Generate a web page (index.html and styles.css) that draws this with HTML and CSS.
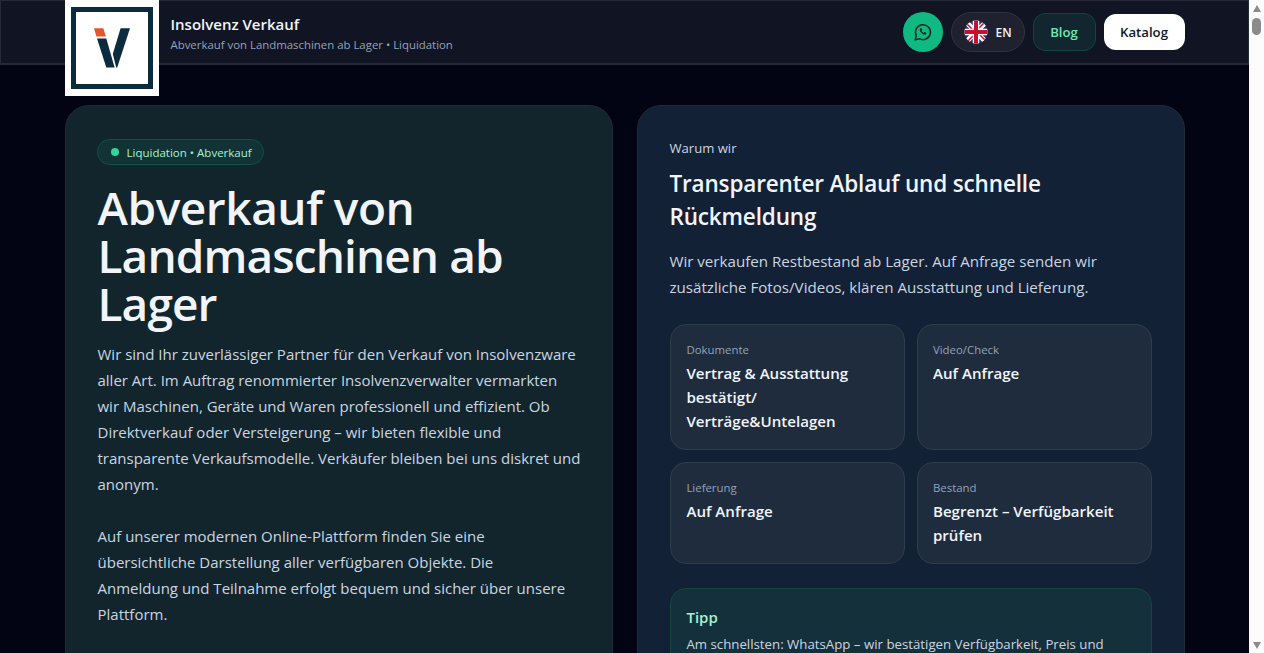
FILE: index.html
```html
<!DOCTYPE html>
<html lang="de">
<head>
  <meta charset="UTF-8">
  <meta name="viewport" content="width=device-width, initial-scale=1.0">
  <title>Insolvenz Verkauf</title>
  <link rel="stylesheet" href="styles.css">
</head>
<body>
  <div class="page">
    <header class="header">
      <div class="header-inner">
        <a class="logo" href="#">
          <svg width="94" height="96" viewBox="0 0 94 96">
            <rect width="94" height="96" fill="#fff"/>
            <rect x="8.5" y="9.5" width="77" height="77" fill="none" stroke="#0c2b3f" stroke-width="5"/>
            <path d="M29 28.3h9.3l2.6 8.2h-9.5z" fill="#e2572b"/>
            <path d="M32 38.4h9.3l8.3 29h-8.3z" fill="#0c2b3f"/>
            <path d="M55.6 28.3H65L52.2 67.5h-1L47.8 54z" fill="#0c2b3f"/>
          </svg>
        </a>
        <div class="brand">
          <div class="brand-name">Insolvenz Verkauf</div>
          <div class="brand-sub">Abverkauf von Landmaschinen ab Lager • Liquidation</div>
        </div>
        <nav class="nav">
          <a class="whatsapp" href="#">
            <svg width="20" height="20" viewBox="0 0 20 20" fill="none" stroke="#062b25">
              <path d="M2.200 17.900l1.100-4.300A7.500 7.500 0 1 1 6.300 16.700z" stroke-width="1.500" stroke-linejoin="round"/>
              <path d="M7.2 6.2c-1 1.200-.4 3.100 1.100 4.600s3.400 2.300 4.700 1.400l.4-1.200-1.700-.9-1 .8c-.9-.3-1.700-1.100-2.100-2.100l.7-.9-.8-1.700z" fill="#062b25" stroke="none"/>
            </svg>
          </a>
          <a class="lang" href="#">
            <svg width="24" height="24" viewBox="0 0 24 24">
              <clipPath id="round"><circle cx="12" cy="12" r="11.500"/></clipPath>
              <g clip-path="url(#round)">
                <rect width="24" height="24" fill="#1b3a80"/>
                <path d="M0 0l24 24M24 0L0 24" stroke="#fff" stroke-width="5"/>
                <path d="M0 1l11 11M24 23L13 12M23 0L12 11M1 24l11-11" stroke="#c8102e" stroke-width="1.500"/>
                <path d="M12 0v24M0 12h24" stroke="#fff" stroke-width="6.500"/>
                <path d="M12 0v24M0 12h24" stroke="#c8102e" stroke-width="4"/>
              </g>
            </svg>
            <span>EN</span>
          </a>
          <a class="blog" href="#">Blog</a>
          <a class="katalog" href="#">Katalog</a>
        </nav>
      </div>
    </header>

    <main class="hero">
      <section class="card card-green">
        <div class="badge"><span class="dot"></span><span>Liquidation • Abverkauf</span></div>
        <h1>Abverkauf von<br>Landmaschinen ab<br>Lager</h1>
        <p class="text">Wir sind Ihr zuverlässiger Partner für den Verkauf von Insolvenzware<br>
          aller Art. Im Auftrag renommierter Insolvenzverwalter vermarkten<br>
          wir Maschinen, Geräte und Waren professionell und effizient. Ob<br>
          Direktverkauf oder Versteigerung – wir bieten flexible und<br>
          transparente Verkaufsmodelle. Verkäufer bleiben bei uns diskret und<br>
          anonym.</p>
        <p class="text">Auf unserer modernen Online-Plattform finden Sie eine<br>
          übersichtliche Darstellung aller verfügbaren Objekte. Die<br>
          Anmeldung und Teilnahme erfolgt bequem und sicher über unsere<br>
          Plattform.</p>
      </section>

      <section class="card card-blue">
        <div class="eyebrow">Warum wir</div>
        <h2>Transparenter Ablauf und schnelle<br>Rückmeldung</h2>
        <p class="text">Wir verkaufen Restbestand ab Lager. Auf Anfrage senden wir<br>
          zusätzliche Fotos/Videos, klären Ausstattung und Lieferung.</p>
        <div class="tiles">
          <div class="tile">
            <div class="label">Dokumente</div>
            <div class="value">Vertrag &amp; Ausstattung<br>bestätigt/<br>Verträge&amp;Untelagen</div>
          </div>
          <div class="tile">
            <div class="label">Video/Check</div>
            <div class="value">Auf Anfrage</div>
          </div>
          <div class="tile">
            <div class="label">Lieferung</div>
            <div class="value">Auf Anfrage</div>
          </div>
          <div class="tile">
            <div class="label">Bestand</div>
            <div class="value">Begrenzt – Verfügbarkeit<br>prüfen</div>
          </div>
        </div>
        <div class="tip">
          <div class="tip-title">Tipp</div>
          <div class="tip-text">Am schnellsten: WhatsApp – wir bestätigen Verfügbarkeit, Preis und</div>
        </div>
      </section>
    </main>
  </div>

  <div class="scrollbar">
    <span class="arrow-up"></span>
    <span class="thumb"></span>
    <span class="arrow-down"></span>
  </div>
</body>
</html>
```
FILE: styles.css
```css
* {
  box-sizing: border-box;
}

body {
  margin: 0;
  height: 653px;
  display: flex;
  overflow: hidden;
  background: #020414;
  color: #f1f5f9;
  font-family: "Open Sans", "Noto Sans", sans-serif;
}

a {
  color: inherit;
  text-decoration: none;
}

h1, h2, p {
  margin: 0;
}

svg {
  display: block;
}

.page {
  flex: 1;
  min-width: 0;
  height: 653px;
  overflow: hidden;
}

/* header */
.header {
  height: 65px;
  background: #111423;
  border: 1px solid #262938;
  border-bottom-width: 2px;
}

.header-inner {
  width: 1120px;
  height: 63px;
  margin: -1px auto 0;
  display: flex;
  align-items: flex-start;
}

.brand {
  margin: 13px 0 0 12px;
  white-space: nowrap;
}

.brand-name {
  font-size: 15px;
  font-weight: 600;
  line-height: 22px;
}

.brand-sub {
  margin-top: 1px;
  font-size: 11.4px;
  line-height: 18px;
  color: #94a3b8;
}

.nav {
  margin-left: auto;
  height: 64px;
  display: flex;
  align-items: center;
  gap: 8px;
  font-size: 13.2px;
  font-weight: 600;
}

.whatsapp {
  width: 40px;
  height: 40px;
  border-radius: 50%;
  background: #10b981;
  display: flex;
  align-items: center;
  justify-content: center;
}

.lang {
  width: 74px;
  height: 40px;
  border: 1px solid #303240;
  border-radius: 20px;
  background: #1f212f;
  display: flex;
  align-items: center;
  padding-left: 12px;
  gap: 8px;
  font-size: 12px;
}

.blog {
  width: 63px;
  height: 38px;
  border: 1px solid #11453f;
  border-radius: 12px;
  background: #11262e;
  color: #6ee7b7;
  line-height: 36px;
  text-align: center;
}

.katalog {
  width: 81px;
  height: 36px;
  border-radius: 12px;
  background: #fff;
  color: #0f172a;
  line-height: 36px;
  text-align: center;
}

/* hero */
.hero {
  width: 1120px;
  margin: 40px auto 0;
  display: grid;
  grid-template-columns: 1fr 1fr;
  gap: 24px;
}

.card {
  height: 620px;
  padding: 33px 32px;
  border: 1px solid #232a38;
  border-radius: 24px;
  white-space: nowrap;
}

.card-green {
  background: #12252d;
}

.card-blue {
  background: #122136;
}

.badge {
  width: 167px;
  height: 26px;
  margin-left: -1px;
  padding-left: 13px;
  border: 1px solid #115043;
  border-radius: 13px;
  background: #123335;
  color: #a7f3d0;
  font-size: 11.5px;
  display: flex;
  align-items: center;
  gap: 8px;
}

.dot {
  width: 8px;
  height: 8px;
  border-radius: 50%;
  background: #34d399;
}

h1 {
  margin: 18px 0 14px;
  font-size: 46px;
  line-height: 48px;
  font-weight: 600;
  letter-spacing: -0.9px;
}

h1::first-line {
  letter-spacing: -0.45px;
}

.text {
  font-size: 15px;
  line-height: 26px;
  color: #cbd5e1;
}

.text + .text {
  margin-top: 26px;
}

.card-blue .text {
  margin-left: -1px;
  font-size: 15.13px;
}

.eyebrow {
  margin: -1px 0 0 -1px;
  font-size: 13.1px;
  line-height: 20px;
  color: #cbd5e1;
}

h2 {
  margin: 9px 0 15px -1px;
  font-size: 22.5px;
  line-height: 33px;
  font-weight: 600;
  letter-spacing: -0.15px;
}

.tiles {
  margin-top: 24px;
  display: grid;
  grid-template-columns: 1fr 1fr;
  gap: 12px;
}

.tile {
  padding: 17px 15px 16px;
  border: 1px solid #2f3c4b;
  border-radius: 16px;
  background: #1e2c3e;
}

.label {
  font-size: 11.4px;
  line-height: 16px;
  color: #94a3b8;
}

.value {
  margin-top: 3px;
  font-size: 15.1px;
  line-height: 24px;
  font-weight: 600;
}

.tip {
  height: 110px;
  margin-top: 24px;
  padding: 16px 15px;
  border: 1px solid #12463f;
  border-radius: 16px;
  background: #14303b;
}

.tip-title {
  font-size: 15px;
  line-height: 24px;
  font-weight: 600;
  color: #a7f3d0;
}

.tip-text {
  margin-top: 5px;
  font-size: 13.25px;
  line-height: 20px;
  color: #cbd5e1;
}

/* scrollbar */
.scrollbar {
  width: 15px;
  height: 653px;
  padding: 5px 0 4px;
  background: #fcfcfc;
  display: flex;
  flex-direction: column;
  align-items: center;
}

.arrow-up {
  border: 4.5px solid transparent;
  border-top: 0;
  border-bottom: 7px solid #8b8b8b;
}

.thumb {
  width: 9px;
  height: 17px;
  margin-top: 6px;
  border-radius: 5px;
  background: #8b8b8b;
}

.arrow-down {
  margin-top: auto;
  border: 4.5px solid transparent;
  border-bottom: 0;
  border-top: 7px solid #8b8b8b;
}
```
